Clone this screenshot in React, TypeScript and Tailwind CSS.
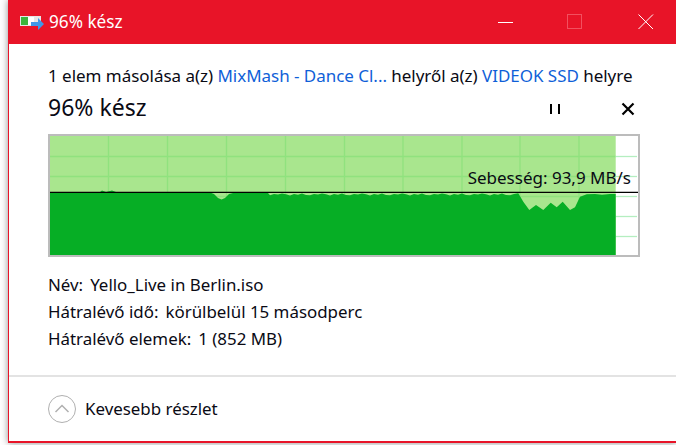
const GREEN = "#06ae25";
const LIGHT = "#a9e68e";

const ripple: [number, number][] = [
  [0, 56], [50, 56], [52, 54.5], [56, 56], [62, 54.5], [66, 56], [160, 56.5], [164, 58], [168, 62], [171.5, 63.5],
  [175, 62], [179, 58], [183, 57], [218, 57],
];
const top: [number, number][] = [...ripple];
for (let x = 220, i = 0; x < 466; x += 4, i++) {
  top.push([x, [59.2, 58, 58.6, 57.6, 58.2, 59.4, 58, 58.8, 57.4, 59][i % 10]]);
}
top.push(
  [468.3, 57.3], [473.3, 65.7], [479.3, 74], [486, 69], [493.3, 74], [500.7, 66.7], [506.7, 71.3], [512.7, 65.7],
  [520, 74], [525, 71.3], [530, 60.7], [536.7, 58.3], [545, 58], [552, 58.8], [560, 58], [565.7, 58],
);
const area = `0,119 ${top.map(([x, y]) => `${x},${y}`).join(" ")} 565.7,119`;

function Chart() {
  const vs = [58.5, 117.5, 176.5, 235.5, 294.5, 353, 412, 470, 529];
  const hs = [20.5, 40.5, 60.5, 80.5, 100.5];
  return (
    <svg width="588" height="119" viewBox="0 0 588 119" className="block">
      <rect x="0" y="0" width="565.7" height="119" fill={LIGHT} />
      {hs.map((y) => (
        <line key={y} x1="0" x2="565.7" y1={y} y2={y} stroke="#90e27e" strokeWidth="1.3" />
      ))}
      {hs.map((y) => (
        <line key={`w${y}`} x1="565.7" x2="587" y1={y} y2={y} stroke="#b4eec0" strokeWidth="1.3" />
      ))}
      {vs.map((x) => (
        <line key={x} x1={x} x2={x} y1="0" y2="119" stroke="#90e27e" strokeWidth="1.3" />
      ))}
      <polygon points={area} fill={GREEN} />
      <line x1="0" x2="588" y1="56.4" y2="56.4" stroke="#000" strokeWidth="1.2" />
    </svg>
  );
}

export default function App() {
  return (
    <div
      className="w-[676px] h-[445px] overflow-hidden bg-white pl-2 pb-[2px] text-[16.9px] leading-5 text-[#0a0a14]"
      style={{ fontFamily: '"Noto Sans", sans-serif' }}
    >
      <div className="flex h-full flex-col border-l border-b-2 border-[#e81428] bg-white shadow-[0_0_7px_rgba(0,0,0,0.45)]">
        <div className="-ml-px flex h-11 items-center bg-[#e81428] text-white">
          <svg width="24" height="16" viewBox="0 0 24 16" className="ml-[12px] mr-[5px]">
            <rect x="0" y="2" width="21" height="10" fill="#e6e6e6" />
            <rect x="1" y="3" width="7" height="8" fill="#3cb43c" />
            <rect x="8" y="3" width="6" height="8" fill="#ffffff" />
            <path d="M11 8h7V4l6 6-6 6v-4h-7z" fill="#3f97e8" />
          </svg>
          <span className="text-[17.2px]">96% kész</span>
          <div className="ml-auto flex items-center">
            <svg width="16" height="16" viewBox="0 0 16 16" className="mr-[53px]">
              <path d="M0 8.5H15" stroke="#fff" strokeWidth="1" />
            </svg>
            <svg width="16" height="16" viewBox="0 0 16 16" className="mr-[55px]">
              <rect x="0.5" y="0.5" width="14" height="14" fill="none" stroke="#f2505f" strokeWidth="1" />
            </svg>
            <svg width="16" height="16" viewBox="0 0 16 16" className="mr-[22px]">
              <path d="M0.5 0.5L15 15M15 0.5L0.5 15" stroke="#fff" strokeWidth="1" />
            </svg>
          </div>
        </div>

        <div className="flex flex-1 flex-col pl-[39px]">
          <div className="mt-[22px] whitespace-nowrap text-[17px] tracking-[-0.03px]">
            1 elem másolása a(z) <span className="text-[#0f5fd8]">MixMash - Dance Cl...</span> helyről a(z){" "}
            <span className="text-[#0f5fd8]">VIDEOK SSD</span> helyre
          </div>
          <div className="mt-[6px] flex h-[30px] items-center">
            <span className="text-[23px]">96% kész</span>
            <svg width="12" height="12" viewBox="0 0 12 12" className="ml-[402px] mt-[4px]">
              <path d="M2 1V11M10 1V11" stroke="#000" strokeWidth="2" />
            </svg>
            <svg width="14" height="14" viewBox="0 0 14 14" className="ml-[60px] mt-[4px]">
              <path d="M1.5 1.5L12.5 12.5M12.5 1.5L1.5 12.5" stroke="#000" strokeWidth="2.2" />
            </svg>
          </div>
          <div className="relative mt-[12px] w-[592px] border-2 border-[#bcbcbc] bg-white">
            <Chart />
            <span className="absolute right-[7px] top-[32px] text-[17px]">Sebesség: 93,9 MB/s</span>
          </div>
          <div className="mt-[18px] flex flex-col gap-[7px]">
            <div className="flex gap-[7px]"><span>Név:</span><span>Yello_Live in Berlin.iso</span></div>
            <div className="flex gap-[7px]"><span>Hátralévő idő:</span><span>körülbelül 15 másodperc</span></div>
            <div className="flex gap-[7px]"><span>Hátralévő elemek:</span><span>1 (852 MB)</span></div>
          </div>
        </div>

        <div className="flex h-[66px] items-center border-t-2 border-[#e3e3e3] pl-[38px]">
          <svg width="30" height="30" viewBox="0 0 30 30" className="mr-[8px]">
            <circle cx="15" cy="15" r="13.5" fill="none" stroke="#b0b0b0" strokeWidth="1" />
            <path d="M8.5 18L15 11.5L21.5 18" fill="none" stroke="#b0b0b0" strokeWidth="1.5" />
          </svg>
          <span>Kevesebb részlet</span>
        </div>
      </div>
    </div>
  );
}
